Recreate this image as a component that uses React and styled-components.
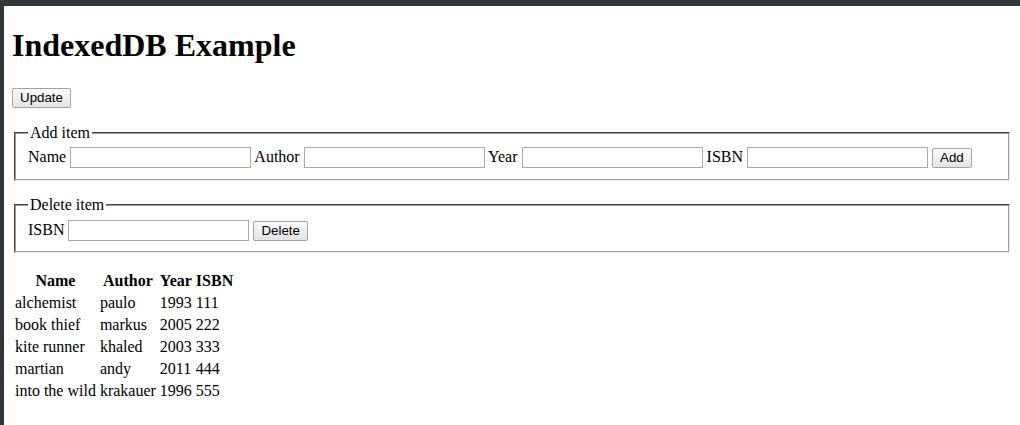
import React from "react";
import styled, { createGlobalStyle } from "styled-components";

const Global = createGlobalStyle`
  html, body { margin: 0; padding: 0; background: #fff; }
  body { font-family: "Liberation Serif", "Times New Roman", serif; font-size: 16px; color: #000; }
`;

const Screen = styled.div`
  min-height: 100vh;
  box-sizing: border-box;
  border-top: 6px solid #33383b;
  border-left: 4px solid #2f3437;
  padding: 0 8px 8px 8px;
`;

const Title = styled.h1`
  font-size: 32px;
  font-weight: bold;
  margin: 21.44px 0;
`;

const Button = styled.button`
  font-family: "Liberation Sans", Arial, sans-serif;
  font-size: 13.33px;
  color: #000;
  padding: 1px 7px;
  border: 1px solid #a3a3a3;
  border-radius: 2px;
  background: linear-gradient(#fbfbfb, #e3e3e3);
  height: 20px;
  line-height: 16px;
  vertical-align: baseline;
`;

const ButtonRow = styled.div`
  padding-top: 2px;
  margin-bottom: 16px;
`;

const Group = styled.fieldset`
  margin: 0 2px ${(p) => p.$gap || 0}px;
  padding: 0.35em 0.75em ${(p) => 10 + (p.$extra || 0)}px;
  border: 2px groove #eeeeee;
  border-color: #9a9a9a #eeeeee #eeeeee #9a9a9a;
  border-style: groove;
`;

const Legend = styled.legend`
  padding: 0 2px;
`;

const Field = styled.input`
  box-sizing: border-box;
  width: 181px;
  height: 21px;
  padding: 1px 2px;
  border: 1px solid #a9a9a9;
  font-family: "Liberation Sans", Arial, sans-serif;
  font-size: 13.33px;
  vertical-align: baseline;
`;

const Table = styled.table`
  margin-top: 16px;
  border-spacing: 2px;
`;

const Th = styled.th`
  padding: 1px;
  font-weight: bold;
  text-align: center;
`;

const Td = styled.td`
  padding: 1px;
`;

const books = [
  ["alchemist", "paulo", "1993", "111"],
  ["book thief", "markus", "2005", "222"],
  ["kite runner", "khaled", "2003", "333"],
  ["martian", "andy", "2011", "444"],
  ["into the wild", "krakauer", "1996", "555"],
];

export default function App() {
  return (
    <>
      <Global />
      <Screen>
        <Title>IndexedDB Example</Title>
        <ButtonRow>
          <Button>Update</Button>
        </ButtonRow>
        <Group $gap={15} $extra={1}>
          <Legend>Add item</Legend>
          Name <Field /> Author <Field /> Year <Field /> ISBN <Field />{" "}
          <Button>Add</Button>
        </Group>
        <Group>
          <Legend>Delete item</Legend>
          ISBN <Field /> <Button>Delete</Button>
        </Group>
        <Table>
          <thead>
            <tr>
              <Th>Name</Th>
              <Th>Author</Th>
              <Th>Year</Th>
              <Th>ISBN</Th>
            </tr>
          </thead>
          <tbody>
            {books.map((b) => (
              <tr key={b[3]}>
                {b.map((c, i) => (
                  <Td key={i}>{c}</Td>
                ))}
              </tr>
            ))}
          </tbody>
        </Table>
      </Screen>
    </>
  );
}
